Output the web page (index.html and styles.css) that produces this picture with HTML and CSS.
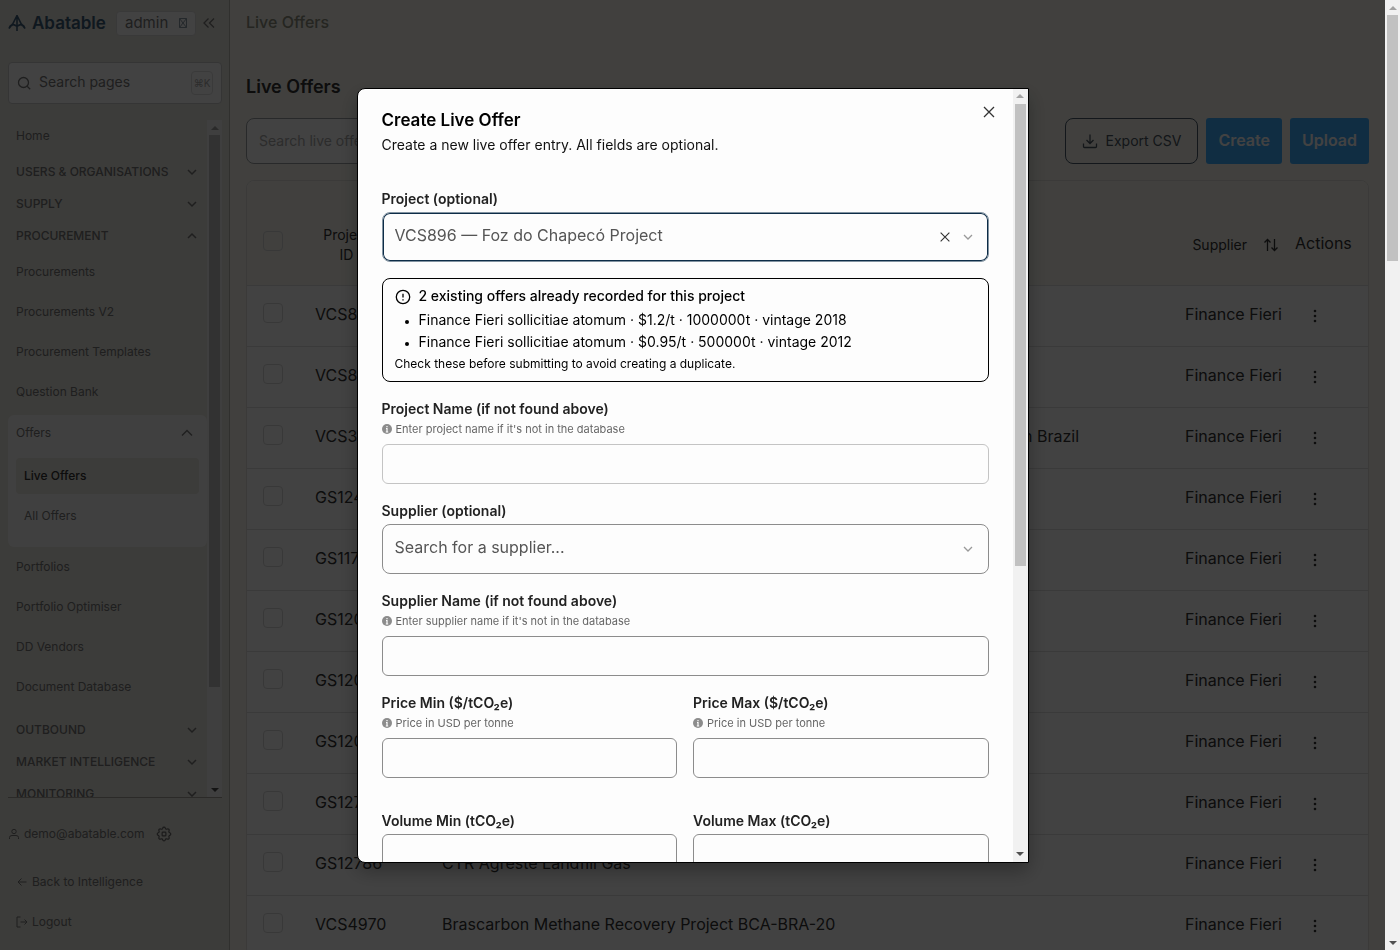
FILE: index.html
```html
<!DOCTYPE html>
<html lang="en">
<head>
<meta charset="utf-8">
<meta name="viewport" content="width=device-width, initial-scale=1">
<title>Live Offers – Abatable</title>
<link rel="stylesheet" href="styles.css">
</head>
<body>
<svg class="sprite" aria-hidden="true">
  <symbol id="down" viewBox="0 0 16 16"><path d="m4 6 4 4 4-4"/></symbol>
  <symbol id="up" viewBox="0 0 16 16"><path d="m4 10 4-4 4 4"/></symbol>
  <symbol id="cross" viewBox="0 0 16 16"><path d="m3 3 10 10M13 3 3 13"/></symbol>
  <symbol id="dots" viewBox="0 0 16 16"><g fill="currentColor" stroke="none"><circle cx="8" cy="3" r="1.3"/><circle cx="8" cy="8" r="1.3"/><circle cx="8" cy="13" r="1.3"/></g></symbol>
  <symbol id="info" viewBox="0 0 10 10"><circle cx="5" cy="5" r="5" fill="currentColor" stroke="none"/><path d="M5 2v1.3M4 4.5h1V8M3.800 8h2.400" stroke="#fdfdfd" stroke-width="1.2"/></symbol>
</svg>

<div class="viewport">
<div class="app">
  <aside class="sidebar">
    <div class="brand">
      <a class="logo" href="#">
        <svg width="18" height="18" viewBox="0 0 18 18"><path d="M9 1v16M9 1.500 3.800 11.800M9 1.500l5.200 10.300M1 14.500C2 11 5 9 9 12.500c4-3.500 7-1.500 8 2M1 14.500 4.500 10M17 14.500 13.500 10"/></svg>
        Abatable
      </a>
      <div class="role">
        <select aria-label="Role"><option>admin</option></select>
        <svg width="8" height="10" viewBox="0 0 8 10"><path d="M.5.5h7v9h-7zM.5.5l7 9M7.500.5l-7 9"/></svg>
      </div>
      <button class="icon-btn" aria-label="Collapse sidebar"><svg width="14" height="14" viewBox="0 0 14 14"><path d="M6.500 2.500 2 7l4.500 4.500M12 2.500 7.500 7l4.500 4.500"/></svg></button>
    </div>
    <div class="page-search">
      <svg width="14" height="14" viewBox="0 0 14 14"><circle cx="6.500" cy="6.500" r="5"/><path d="m10.200 10.200 3 3"/></svg>
      <input type="search" placeholder="Search pages" aria-label="Search pages">
      <kbd>⌘K</kbd>
    </div>
    <div class="nav-wrap">
      <nav class="nav">
        <a class="nav-home" href="#">Home</a>
        <button class="nav-group">USERS &amp; ORGANISATIONS<svg><use href="#down"/></svg></button>
        <button class="nav-group">SUPPLY<svg><use href="#down"/></svg></button>
        <button class="nav-group">PROCUREMENT<svg><use href="#up"/></svg></button>
        <a class="nav-item" href="#">Procurements</a>
        <a class="nav-item" href="#">Procurements V2</a>
        <a class="nav-item" href="#">Procurement Templates</a>
        <a class="nav-item" href="#">Question Bank</a>
        <div class="nav-sub">
          <button class="nav-sub-head">Offers<svg><use href="#up"/></svg></button>
          <a class="nav-sub-item current" href="#">Live Offers</a>
          <a class="nav-sub-item" href="#">All Offers</a>
        </div>
        <a class="nav-item" href="#">Portfolios</a>
        <a class="nav-item" href="#">Portfolio Optimiser</a>
        <a class="nav-item" href="#">DD Vendors</a>
        <a class="nav-item last" href="#">Document Database</a>
        <button class="nav-group">OUTBOUND<svg><use href="#down"/></svg></button>
        <button class="nav-group">MARKET INTELLIGENCE<svg><use href="#down"/></svg></button>
        <button class="nav-group">MONITORING<svg><use href="#down"/></svg></button>
      </nav>
      <div class="bar" aria-hidden="true"><i class="arrow up"></i><div class="track"><div class="thumb" style="height:85.3%"></div></div><i class="arrow"></i></div>
    </div>
    <div class="account">
      <div class="user">
        <svg width="12" height="12" viewBox="0 0 12 12"><circle cx="6" cy="3.500" r="2.200"/><path d="M1.500 11V9.500Q1.500 7.500 4 7.500h4q2.500 0 2.500 2V11"/></svg>
        <span>demo@abatable.com</span>
        <button class="icon-btn" aria-label="Settings"><svg class="gear" viewBox="0 0 24 24"><rect x="9.500" y="9.500" width="5" height="5" rx="1"/><path d="M10.300 4.300c.4-1.800 3-1.800 3.400 0a1.700 1.700 0 0 0 2.600 1.100c1.500-1 3.300.8 2.400 2.400a1.700 1.700 0 0 0 1 2.500c1.800.5 1.800 3 0 3.500a1.700 1.700 0 0 0-1 2.500c.9 1.600-.9 3.300-2.400 2.400a1.700 1.700 0 0 0-2.600 1c-.4 1.800-3 1.800-3.400 0a1.700 1.700 0 0 0-2.600-1c-1.500.9-3.300-.8-2.400-2.400a1.700 1.700 0 0 0-1-2.500c-1.800-.5-1.800-3 0-3.500a1.700 1.700 0 0 0 1-2.500c-.9-1.600.9-3.400 2.400-2.400 1 .6 2.300 0 2.600-1.100z"/></svg></button>
      </div>
      <a href="#"><svg width="12" height="12" viewBox="0 0 12 12"><path d="M10.500 6H2m3.500-3.500L2 6l3.500 3.500"/></svg>Back to Intelligence</a>
      <a href="#"><svg width="12" height="12" viewBox="0 0 12 12"><path d="M4.500 1H1v10h3.500M4.500 6H11M8.500 3.500 11 6 8.500 8.500"/></svg>Logout</a>
    </div>
  </aside>

  <main class="main">
    <div class="crumb">Live Offers</div>
    <h1>Live Offers</h1>
    <div class="toolbar">
      <input type="search" placeholder="Search live offers..." aria-label="Search live offers">
      <button class="btn-outline"><svg width="16" height="16" viewBox="0 0 16 16"><path d="M8 1.500v9M4.500 7 8 10.500 11.500 7M1.500 10.500v3q0 1 1 1h11q1 0 1-1v-3"/></svg>Export CSV</button>
      <button class="btn-solid">Create</button>
      <button class="btn-solid">Upload</button>
    </div>
    <div class="card">
      <table>
        <colgroup><col class="c-check"><col class="c-id"><col><col class="c-supplier"><col class="c-actions"></colgroup>
        <thead><tr>
          <th><input type="checkbox" aria-label="Select all"></th>
          <th class="th-id">Project ID</th>
          <th></th>
          <th><span class="sort">Supplier<svg width="16" height="16" viewBox="0 0 16 16"><path d="M4.500 14V2.500M1.500 5.500l3-3 3 3M11.500 2v11.500M8.500 10.500l3 3 3-3"/></svg></span></th>
          <th class="th-actions">Actions</th>
        </tr></thead>
        <tbody>
          <tr><td><input type="checkbox" aria-label="Select row"></td><td>VCS896</td><td></td><td><div class="clip">Finance Fieri</div></td><td><button class="icon-btn" aria-label="Row actions"><svg><use href="#dots"/></svg></button></td></tr>
          <tr><td><input type="checkbox" aria-label="Select row"></td><td>VCS896</td><td></td><td><div class="clip">Finance Fieri</div></td><td><button class="icon-btn" aria-label="Row actions"><svg><use href="#dots"/></svg></button></td></tr>
          <tr><td><input type="checkbox" aria-label="Select row"></td><td>VCS3</td><td class="to-end">in Brazil</td><td><div class="clip">Finance Fieri</div></td><td><button class="icon-btn" aria-label="Row actions"><svg><use href="#dots"/></svg></button></td></tr>
          <tr><td><input type="checkbox" aria-label="Select row"></td><td>GS124</td><td></td><td><div class="clip">Finance Fieri</div></td><td><button class="icon-btn" aria-label="Row actions"><svg><use href="#dots"/></svg></button></td></tr>
          <tr><td><input type="checkbox" aria-label="Select row"></td><td>GS117</td><td></td><td><div class="clip">Finance Fieri</div></td><td><button class="icon-btn" aria-label="Row actions"><svg><use href="#dots"/></svg></button></td></tr>
          <tr><td><input type="checkbox" aria-label="Select row"></td><td>GS120</td><td></td><td><div class="clip">Finance Fieri</div></td><td><button class="icon-btn" aria-label="Row actions"><svg><use href="#dots"/></svg></button></td></tr>
          <tr><td><input type="checkbox" aria-label="Select row"></td><td>GS120</td><td></td><td><div class="clip">Finance Fieri</div></td><td><button class="icon-btn" aria-label="Row actions"><svg><use href="#dots"/></svg></button></td></tr>
          <tr><td><input type="checkbox" aria-label="Select row"></td><td>GS120</td><td></td><td><div class="clip">Finance Fieri</div></td><td><button class="icon-btn" aria-label="Row actions"><svg><use href="#dots"/></svg></button></td></tr>
          <tr><td><input type="checkbox" aria-label="Select row"></td><td>GS127</td><td></td><td><div class="clip">Finance Fieri</div></td><td><button class="icon-btn" aria-label="Row actions"><svg><use href="#dots"/></svg></button></td></tr>
          <tr><td><input type="checkbox" aria-label="Select row"></td><td>GS12786</td><td>CTR Agreste Landfill Gas</td><td><div class="clip">Finance Fieri</div></td><td><button class="icon-btn" aria-label="Row actions"><svg><use href="#dots"/></svg></button></td></tr>
          <tr><td><input type="checkbox" aria-label="Select row"></td><td>VCS4970</td><td>Brascarbon Methane Recovery Project BCA-BRA-20</td><td><div class="clip">Finance Fieri</div></td><td><button class="icon-btn" aria-label="Row actions"><svg><use href="#dots"/></svg></button></td></tr>
        </tbody>
      </table>
    </div>
  </main>
</div>

<div class="backdrop">
  <div class="dialog" role="dialog" aria-modal="true" aria-labelledby="dlg-title">
    <form class="dialog-body">
      <button type="button" class="icon-btn close" aria-label="Close"><svg><use href="#cross"/></svg></button>
      <h2 id="dlg-title">Create Live Offer</h2>
      <p class="desc">Create a new live offer entry. All fields are optional.</p>

      <div class="field first">
        <label for="project">Project (optional)</label>
        <div class="combo focused">
          <input id="project" role="combobox" aria-expanded="false" value="VCS896 — Foz do Chapecó Project">
          <button type="button" class="icon-btn clear" aria-label="Clear"><svg><use href="#cross"/></svg></button>
          <svg class="chev"><use href="#down"/></svg>
        </div>
      </div>

      <div class="alert" role="alert">
        <svg width="16" height="16" viewBox="0 0 16 16"><circle cx="8" cy="8" r="6.700"/><path d="M8 4.800v3.700M8 10.300v1.200"/></svg>
        <strong>2 existing offers already recorded for this project</strong>
        <ul>
          <li>Finance Fieri sollicitiae atomum · $1.2/t · 1000000t · vintage 2018</li>
          <li>Finance Fieri sollicitiae atomum · $0.95/t · 500000t · vintage 2012</li>
        </ul>
        <p>Check these before submitting to avoid creating a duplicate.</p>
      </div>

      <div class="field">
        <label for="pname">Project Name (if not found above)</label>
        <p class="help"><svg><use href="#info"/></svg>Enter project name if it's not in the database</p>
        <input class="text light" id="pname" type="text">
      </div>
      <div class="field">
        <label for="supplier">Supplier (optional)</label>
        <div class="combo">
          <input id="supplier" role="combobox" aria-expanded="false" placeholder="Search for a supplier...">
          <svg class="chev"><use href="#down"/></svg>
        </div>
      </div>
      <div class="field">
        <label for="sname">Supplier Name (if not found above)</label>
        <p class="help"><svg><use href="#info"/></svg>Enter supplier name if it's not in the database</p>
        <input class="text" id="sname" type="text">
      </div>
      <div class="pair">
        <div class="field">
          <label for="pmin">Price Min ($/tCO₂e)</label>
          <p class="help"><svg><use href="#info"/></svg>Price in USD per tonne</p>
          <input class="text" id="pmin" type="text">
        </div>
        <div class="field">
          <label for="pmax">Price Max ($/tCO₂e)</label>
          <p class="help"><svg><use href="#info"/></svg>Price in USD per tonne</p>
          <input class="text" id="pmax" type="text">
        </div>
      </div>
      <div class="pair">
        <div class="field">
          <label for="vmin">Volume Min (tCO₂e)</label>
          <input class="text" id="vmin" type="text">
        </div>
        <div class="field">
          <label for="vmax">Volume Max (tCO₂e)</label>
          <input class="text" id="vmax" type="text">
        </div>
      </div>
    </form>
    <div class="bar" aria-hidden="true"><i class="arrow up"></i><div class="track"><div class="thumb" style="height:62.3%"></div></div><i class="arrow"></i></div>
  </div>
</div>
</div>
<div class="bar" aria-hidden="true"><i class="arrow up"></i><div class="track"><div class="thumb" style="height:26.7%"></div></div><i class="arrow"></i></div>
</body>
</html>
```
FILE: styles.css
```css
* { box-sizing: border-box; }
body {
  display: flex;
  height: 100vh;
  margin: 0;
  overflow: hidden;
  font-family: Inter, "Liberation Sans", sans-serif;
  font-size: 14px;
  line-height: 20px;
  color: #333;
}
.viewport { flex: 1; min-width: 0; display: grid; overflow-y: auto; scrollbar-width: none; }
.sprite { display: none; }
svg { width: 16px; height: 16px; flex: none; fill: none; stroke: currentColor; stroke-width: 1.3; }
svg[width="18"] { width: 18px; height: 18px; stroke-width: 1.6; }
svg[width="14"] { width: 14px; height: 14px; }
svg[width="12"] { width: 12px; height: 12px; stroke-width: 1; }
svg[width="8"] { width: 8px; height: 10px; }
svg.gear { width: 18px; height: 18px; stroke-width: 1.6; }
a { color: inherit; text-decoration: none; }
button, input, select { font: inherit; color: inherit; }
button { padding: 0; border: 0; background: none; text-align: left; }
h1, h2, p, ul { margin: 0; padding: 0; }
.icon-btn { display: grid; place-items: center; }

/* scrollbars */
.bar { display: flex; flex-direction: column; flex: none; width: 15px; background: #f1f1f1; }
.track { flex: 1; padding: 0 2px; }
.thumb { background: #c1c1c1; }
.arrow { display: grid; place-items: center; height: 15px; }
.arrow::before { content: ""; border: 4px solid transparent; border-top-color: #505050; border-bottom: 0; }
.arrow.up::before { border: 4px solid transparent; border-bottom-color: #a3a3a3; border-top: 0; }

.app { grid-area: 1 / 1; display: flex; background: #faf8f0; }

/* sidebar */
.sidebar {
  position: sticky;
  top: 0;
  display: flex;
  flex-direction: column;
  flex: none;
  width: 230px;
  height: 100vh;
  padding: 0 7px 8px 8px;
  background: #e8e6de;
  border-right: 1px solid #bbb9b2;
  font-size: 12px;
  color: #777;
}
.brand { display: flex; align-items: center; height: 46px; }
.logo { display: flex; align-items: center; gap: 6px; width: 108px; color: #3d5c78; font-size: 17px; font-weight: 600; }
.role {
  display: flex;
  align-items: center;
  width: 80px;
  height: 25px;
  margin-right: 6px;
  padding: 0 8px;
  background: #fff;
  border: 1px solid #ddd;
  border-radius: 4px;
}
.role select { flex: 1; min-width: 0; padding: 0; appearance: none; background: none; border: 0; font-size: 15px; }
.role svg { stroke: #8a9aa5; stroke-width: 1; }
.page-search {
  display: flex;
  align-items: center;
  gap: 8px;
  height: 42px;
  margin: 16px 0;
  padding: 0 8px;
  background: #fff;
  border: 1px solid #ccc;
  border-radius: 4px;
}
.page-search input { flex: 1; min-width: 0; padding: 0 0 2px; background: none; border: 0; font-size: 14px; }
.page-search input::placeholder { color: #777; }
.page-search kbd { width: 22px; height: 24px; border: 1px solid #e0e0e0; border-radius: 4px; font: 10px/22px Inter, sans-serif; text-align: center; color: #aaa; }
.nav-wrap { display: flex; flex: 1; min-height: 0; }
.nav { flex: 1; min-width: 0; overflow-y: auto; scrollbar-width: none; }
.nav-home { display: flex; align-items: center; height: 32px; margin-bottom: 4px; padding: 0 8px; }
.nav-group { display: flex; align-items: center; justify-content: space-between; width: 100%; height: 32px; padding: 0 7px 0 8px; font-size: 12px; font-weight: 500; }
.nav-group svg { stroke-width: 1.5; }
.nav-item { display: flex; align-items: center; height: 40px; padding: 0 8px; }
.nav-item.last { margin-bottom: 7px; }
.nav-sub { height: 132px; margin-top: 3px; padding: 0 8px 8px; background: #f6f6f6; border-radius: 6px; }
.nav-sub-head { display: flex; align-items: center; justify-content: space-between; width: 100%; height: 36px; margin-bottom: 7px; padding-right: 2px; }
.nav-sub-head svg { width: 20px; height: 20px; stroke-width: 1.1; }
.nav-sub-item { display: flex; align-items: center; height: 36px; margin-bottom: 4px; padding: 0 8px; border-radius: 4px; }
.nav-sub-item.current { background: #e8e6de; color: #333; font-weight: 500; }
.account { border-top: 1px solid #a5a39c; }
.account a { display: flex; align-items: center; gap: 4px; height: 40px; padding-left: 8px; }
.user { display: flex; align-items: center; gap: 4px; height: 40px; margin: 16px 0 8px; }
.user .icon-btn { margin-left: 6px; color: #666; }

/* page */
.main { flex: 1; min-width: 0; padding: 0 16px; }
.crumb { height: 44px; line-height: 44px; font-size: 16px; font-weight: 500; color: #8f9080; }
h1 { margin: 30px 0 19px; font-size: 18px; line-height: 25px; font-weight: 600; color: #333; }
.toolbar { display: flex; align-items: center; gap: 8px; height: 46px; margin-bottom: 16px; }
.toolbar input { width: 400px; height: 46px; padding: 0 12px 2px; background: #fff; border: 1px solid #9ca0a4; border-radius: 8px; font-size: 14px; }
.toolbar input::placeholder { color: #aaa; }
.toolbar button { height: 46px; }
.btn-outline { display: flex; align-items: center; gap: 8px; margin-left: auto; padding: 0 16px; border: 1px solid #4a5a6a; border-radius: 8px; color: #4a5560; }
.btn-solid { padding: 0 12px 2px; background: #40adff; border-radius: 3px; color: #fff; font-size: 16px; font-weight: 600; }
.card { background: #fff; border: 1px solid #e2e1dc; border-radius: 8px; overflow: hidden; }
table { width: 100%; table-layout: fixed; border-collapse: collapse; }
.c-check { width: 52px; }
.c-id { width: 127px; }
.c-supplier { width: 126px; }
.c-actions { width: 73px; }
th { height: 104px; padding: 0 16px 20px; vertical-align: bottom; font-weight: 400; background: #faf8f0; }
th:first-child { padding-bottom: 34px; text-align: left; }
.th-id { padding-right: 48px; padding-left: 16px; }
.th-actions { padding: 0 0 32px; font-size: 16px; text-align: left; }
.sort { display: flex; align-items: center; justify-content: flex-end; gap: 16px; height: 40px; }
td { height: 61px; padding: 0 16px 4px; border-top: 1px solid #e0e0e0; font-size: 16px; white-space: nowrap; }
td:first-child { padding-bottom: 6px; }
td:nth-child(4) { padding-right: 12px; }
td:last-child { padding: 0 12px; }
.clip { overflow: hidden; }
td.to-end { padding-right: 90px; text-align: right; }
input[type="checkbox"] { display: block; width: 20px; height: 20px; margin: 0; appearance: none; border: 1px solid #d8d8d8; border-radius: 4px; }

/* dialog */
.backdrop {
  grid-area: 1 / 1;
  align-self: start;
  position: sticky;
  top: 0;
  display: flex;
  align-items: center;
  justify-content: center;
  height: 100vh;
  background: rgba(0, 0, 0, .74);
}
.dialog {
  display: flex;
  width: 100%;
  max-width: 672px;
  max-height: calc(100vh - 175px);
  overflow: hidden;
  background: #fdfdfd;
  border: 1px solid #000;
  border-radius: 8px 0 0 8px;
  box-shadow: 0 8px 20px rgba(0, 0, 0, .3);
  color: #111;
}
.dialog-body { position: relative; flex: 1; min-width: 0; padding: 19px 24px 24px; overflow-y: auto; scrollbar-width: none; }
.close { position: absolute; top: 15px; right: 16px; color: #333; }
h2 { font-size: 17px; line-height: 24px; font-weight: 600; color: #000; }
.desc { margin-top: 3px; }
.field { display: flex; flex-direction: column; margin-top: 17px; }
.field.first { margin-top: 34px; }
.field label { font-weight: 600; color: #222; }
.combo { display: flex; align-items: center; gap: 8px; height: 50px; margin-top: 3px; padding: 0 12px; border: 1px solid #8c8c8c; border-radius: 8px; color: #999; }
.combo.focused { border-color: #8293a1; box-shadow: inset 0 0 0 1px #0d2c47; }
.combo input { flex: 1; min-width: 0; height: 40px; padding: 0 0 4px; background: none; border: 0; outline: 0; font-size: 16px; color: #555; }
.combo input::placeholder { color: #555; }
.combo .clear { color: #333; }
.combo .clear svg { width: 14px; height: 14px; }
.help { display: flex; align-items: center; gap: 4px; margin: 1px 0 3px; font-size: 11px; line-height: 18px; color: #666; }
.help svg { width: 10px; height: 10px; color: #8c8c8c; }
.text { width: 100%; height: 40px; margin-top: 3px; padding: 0 12px; background: #fdfdfd; border: 1px solid #8c8c8c; border-radius: 6px; }
.text.light { border-color: #c4c4c4; }
.alert { display: grid; grid-template-columns: 16px 1fr; column-gap: 8px; margin-top: 16px; padding: 7px 12px; border: 1px solid #000; border-radius: 8px; color: #000; }
.alert svg { margin-top: 3px; }
.alert strong { font-weight: 500; }
.alert ul { grid-column: 2; margin-top: 3px; line-height: 22px; }
.alert li::marker { font-size: 11px; }
.alert p { grid-column: 1 / -1; margin-top: 1px; font-size: 12px; }
.pair { display: grid; grid-template-columns: 1fr 1fr; gap: 16px; }
.pair + .pair { margin-top: 16px; }
```
